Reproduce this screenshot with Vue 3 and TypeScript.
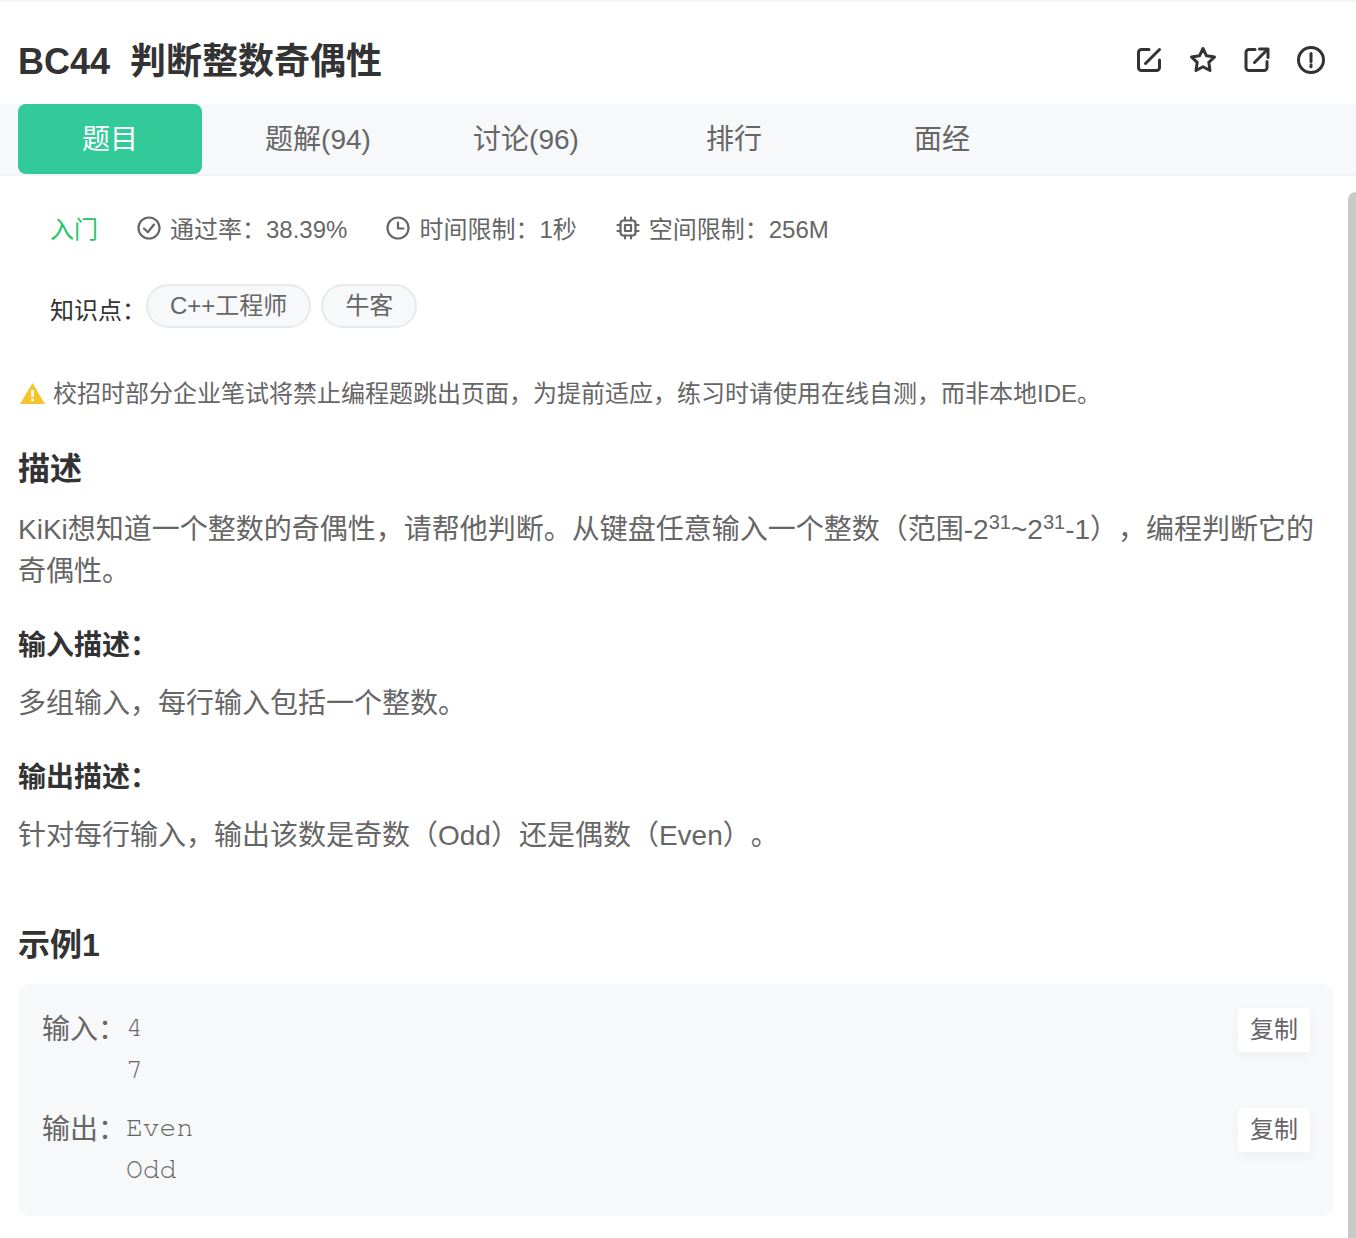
<script setup lang="ts">
const tabs = ['题目', '题解(94)', '讨论(96)', '排行', '面经']
</script>

<template>
  <div class="page">
    <header class="head">
      <h1 class="title">BC44&nbsp;&nbsp;判断整数奇偶性</h1>
      <div class="actions">
        <svg viewBox="0 0 28 28" class="act"><path d="M14 3.500H6.500a3 3 0 0 0-3 3v15a3 3 0 0 0 3 3h15a3 3 0 0 0 3-3V14" /><path d="M10.500 17.500 24.500 3.500" /></svg>
        <svg viewBox="0 0 28 28" class="act"><path d="M14 2.500 17.500 9.800 25.500 10.900 19.800 16.400 21 24.500 14 20.700 7 24.500 8.200 16.400 2.500 10.900 10.500 9.800Z" /></svg>
        <svg viewBox="0 0 28 28" class="act"><path d="M12 3.500H6a3 3 0 0 0-3 3v15a3 3 0 0 0 3 3h15a3 3 0 0 0 3-3v-6" /><path d="M11.500 16.500 24 4" /><path d="M16.500 3H25V11.500" /></svg>
        <svg viewBox="0 0 28 28" class="act"><circle cx="14" cy="14" r="12.500" /><path d="M14 7.500V15.500" /><path d="M14 18.800V20.800" /></svg>
      </div>
    </header>

    <nav class="tabs">
      <div v-for="(t, i) in tabs" :key="t" class="tab" :class="{ on: i === 0 }">{{ t }}</div>
    </nav>

    <main class="body">
      <div class="meta">
        <span class="level">入门</span>
        <span class="stat">
          <svg viewBox="0 0 24 24" class="ico"><circle cx="12" cy="12" r="10.500" /><path d="M7 12.500 10.800 16.200 17 8.500" /></svg>
          通过率：38.39%
        </span>
        <span class="stat">
          <svg viewBox="0 0 24 24" class="ico"><circle cx="12" cy="12" r="10.500" /><path d="M12 6.500V12.500H17.500" /></svg>
          时间限制：1秒
        </span>
        <span class="stat">
          <svg viewBox="0 0 24 24" class="ico"><rect x="4.500" y="4.500" width="15" height="15" rx="3" /><rect x="9" y="9" width="6" height="6" /><path d="M9 1.500v3M15 1.500v3M9 19.500v3M15 19.500v3M1.500 9h3M1.500 15h3M19.500 9h3M19.500 15h3" /></svg>
          空间限制：256M
        </span>
      </div>

      <div class="points">
        <span class="plabel">知识点：</span>
        <span class="pill">C++工程师</span>
        <span class="pill">牛客</span>
      </div>

      <p class="warn">
        <svg viewBox="0 0 24 20" class="warn-ico"><path d="M12 0 24 20H0Z" fill="#f5c42c" /><rect x="10.800" y="6.500" width="2.400" height="7" fill="#fff" /><rect x="10.800" y="15" width="2.400" height="2.400" fill="#fff" /></svg>
        校招时部分企业笔试将禁止编程题跳出页面，为提前适应，练习时请使用在线自测，而非本地IDE。
      </p>

      <h2 class="h-main">描述</h2>
      <p class="para">KiKi想知道一个整数的奇偶性，请帮他判断。从键盘任意输入一个整数（范围-2<sup>31</sup>~2<sup>31</sup>-1），编程判断它的奇偶性。</p>

      <h3 class="h-sub">输入描述：</h3>
      <p class="para">多组输入，每行输入包括一个整数。</p>

      <h3 class="h-sub">输出描述：</h3>
      <p class="para">针对每行输入，输出该数是奇数（Odd）还是偶数（Even）。</p>

      <h2 class="h-ex">示例1</h2>
      <section class="example">
        <div class="io">
          <span class="io-label">输入：</span>
          <pre class="code">4
7</pre>
          <button class="copy" type="button">复制</button>
        </div>
        <div class="io">
          <span class="io-label">输出：</span>
          <pre class="code">Even
Odd</pre>
          <button class="copy" type="button">复制</button>
        </div>
      </section>
    </main>
    <div class="scrollbar"></div>
  </div>
</template>

<style>
html, body { margin: 0; background: #fff; }
</style>

<style scoped>
.page {
  position: relative;
  height: 1238px;
  overflow: hidden;
  box-sizing: border-box;
  border-top: 2px solid #f4f5f7;
  background: #fff;
  color: #666;
  font-family: "Liberation Sans", "Noto Sans CJK SC", sans-serif;
  text-spacing-trim: space-all;
}
.head {
  height: 102px;
  padding: 0 31px 0 18px;
  display: flex;
  align-items: center;
  justify-content: space-between;
  box-sizing: border-box;
}
.title { margin: 10px 0 0; font-size: 36px; font-weight: 700; color: #333; }
.actions { display: flex; gap: 26px; margin-top: 14px; }
.act { width: 28px; height: 28px; fill: none; stroke: #333; stroke-width: 3; stroke-linecap: round; stroke-linejoin: round; }
.tabs {
  height: 72px;
  display: flex;
  background: #f7f8fa;
  border-bottom: 2px solid #f2f3f5;
  box-sizing: border-box;
  padding-left: 18px;
}
.tab {
  width: 184px;
  margin-right: 24px;
  height: 70px;
  line-height: 72px;
  text-align: center;
  font-size: 28px;
}
.tab.on { background: #32ca99; color: #fff; border-radius: 8px; }
.body { padding: 0 22px 0 18px; }
.meta {
  display: flex;
  align-items: center;
  gap: 40px;
  padding: 36px 0 0 32px;
  font-size: 24px;
  line-height: 36px;
}
.level { color: #25c46a; }
.stat { display: flex; align-items: center; gap: 8px; }
.ico { width: 24px; height: 24px; fill: none; stroke: #666; stroke-width: 2.200; stroke-linecap: round; stroke-linejoin: round; margin: -4px 1px 0 -1px; }
.points { display: flex; align-items: center; padding: 36px 0 0 32px; font-size: 24px; }
.plabel { color: #333; margin-top: 4px; width: 96px; }
.pill {
  height: 44px;
  line-height: 40px;
  box-sizing: border-box;
  padding: 0 22px;
  margin-right: 10px;
  border: 2px solid #e8e9eb;
  border-radius: 22px;
  background: #f7f8fa;
}
.warn {
  margin: 46px 0 0;
  font-size: 24px;
  line-height: 40px;
  display: flex;
  align-items: center;
  gap: 8px;
  padding-left: 2px;
}
.warn-ico { width: 25px; height: 21px; margin-top: -1px; }
.h-main { margin: 31px 0 0; font-size: 32px; line-height: 48px; color: #333; }
.para { margin: 16px 0 0; font-size: 28px; line-height: 42px; }
.para sup { font-size: 20px; line-height: 0; }
.h-sub { margin: 32px 0 0; font-size: 28px; line-height: 42px; color: #333; }
.h-ex { margin: 64px 0 0; font-size: 32px; line-height: 48px; color: #333; }
.example {
  margin-top: 15px;
  padding: 24px;
  height: 232px;
  box-sizing: border-box;
  background: #f7f8fa;
  border-radius: 12px;
}
.io { display: flex; align-items: flex-start; height: 100px; }
.io-label { font-size: 28px; line-height: 44px; width: 84px; flex: none; }
.code {
  margin: -1px 0 0;
  flex: 1;
  font-family: "Nimbus Mono PS", "FreeMono", "Courier", "Courier New", "Liberation Mono", monospace;
  font-size: 28px;
  line-height: 42px;
  color: #666;
}
.copy {
  width: 72px;
  height: 44px;
  padding: 0;
  border: 0;
  border-radius: 4px;
  background: #fff;
  color: #666;
  font: 24px/44px "Liberation Sans", "Noto Sans CJK SC", sans-serif;
  box-shadow: 0 4px 12px rgba(0, 0, 0, 0.04);
}
.scrollbar {
  position: absolute;
  right: 0;
  top: 190px;
  bottom: 0;
  width: 8px;
  background: #c9c9c9;
  border-radius: 8px 0 0 0;
}
</style>
